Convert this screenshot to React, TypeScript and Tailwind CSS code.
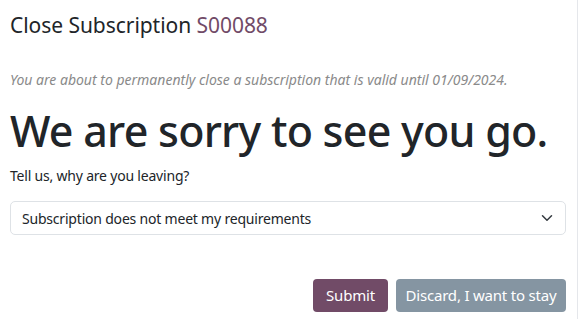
import React from "react";

export default function App() {
  return (
    <div
      className="w-[579px] h-[319px] bg-white overflow-hidden"
      style={{ fontFamily: '"Noto Sans", "Open Sans", sans-serif' }}
    >
      <div className="w-[578px] h-[319px] border-r border-[#e5e7eb] pl-[10px] pr-[11px]">
        <h1 className="pt-[10px] text-[21px] leading-[30px] tracking-[-0.05px] text-[#212529]">
          Close Subscription <span className="text-[#714B67]">S00088</span>
        </h1>
        <p className="mt-[30px] text-[14px] leading-[20px] italic text-[#8a8a8a]">
          You are about to permanently close a subscription that is valid until 01/09/2024.
        </p>
        <h2 className="mt-[15px] text-[43px] leading-[52px] font-medium tracking-[-0.75px] text-[#212529] whitespace-nowrap">
          We are sorry to see you go.
        </h2>
        <p className="mt-[9px] text-[14px] leading-[20px] tracking-[-0.2px] text-[#212529]">
          Tell us, why are you leaving?
        </p>
        <div className="mt-[15px] h-[34px] border border-[#dee2e6] rounded-[5px] flex items-center justify-between pl-[11px] pr-[12px] text-[14px] tracking-[-0.2px] text-[#212529]">
          <span>Subscription does not meet my requirements</span>
          <svg width="12" height="12" viewBox="0 0 16 16" fill="none" stroke="#343a40" strokeWidth="2" strokeLinecap="round" strokeLinejoin="round">
            <path d="M2 5l6 6 6-6" />
          </svg>
        </div>
        <div className="mt-[44px] flex justify-end gap-[8px]">
          <button className="h-[33px] w-[75px] rounded-[4px] bg-[#714B67] text-white text-[15px] tracking-[-0.2px] flex items-center justify-center">
            Submit
          </button>
          <button className="h-[33px] w-[170px] rounded-[4px] bg-[#8595A2] text-white text-[15px] tracking-[-0.2px] flex items-center justify-center">
            Discard, I want to stay
          </button>
        </div>
      </div>
    </div>
  );
}
